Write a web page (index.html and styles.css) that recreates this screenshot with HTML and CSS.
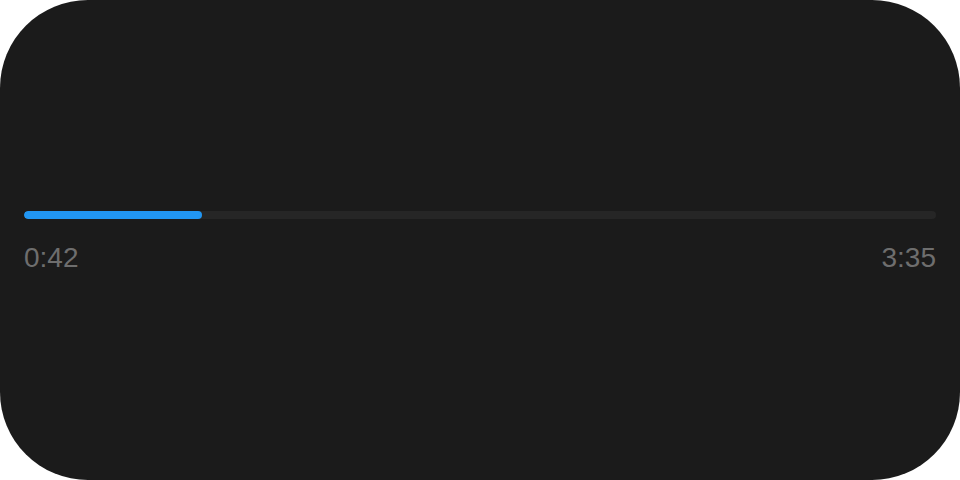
FILE: index.html
```html
<!DOCTYPE html>
<html lang="en">
<head>
    <meta charset="UTF-8">
    <meta name="viewport" content="width=device-width, initial-scale=1.0">
    <title>Progress</title>
    <link rel="stylesheet" href="styles.css">
</head>
<body>
    <div class="player">
        <div class="track">
            <div class="fill" style="width: 19.5%;"></div>
        </div>
        <div class="times">
            <span>0:42</span>
            <span>3:35</span>
        </div>
    </div>
</body>
</html>
```

FILE: styles.css
```css
body {
    margin: 0;
    background-color: #fff;
    font-family: "Liberation Sans", Arial, sans-serif;
}

.player {
    width: 960px;
    height: 480px;
    box-sizing: border-box;
    padding: 5px 24px 0;
    background-color: #1b1b1b;
    border-radius: 88px;
    display: flex;
    flex-direction: column;
    justify-content: center;
    gap: 23px;
}

.track {
    height: 8px;
    border-radius: 4px;
    background-color: #262626;
    overflow: hidden;
}

.fill {
    height: 100%;
    border-radius: 4px;
    background-color: #2196f3;
}

.times {
    display: flex;
    justify-content: space-between;
    font-size: 28px;
    line-height: 32px;
    color: #6e6e6e;
}
```
